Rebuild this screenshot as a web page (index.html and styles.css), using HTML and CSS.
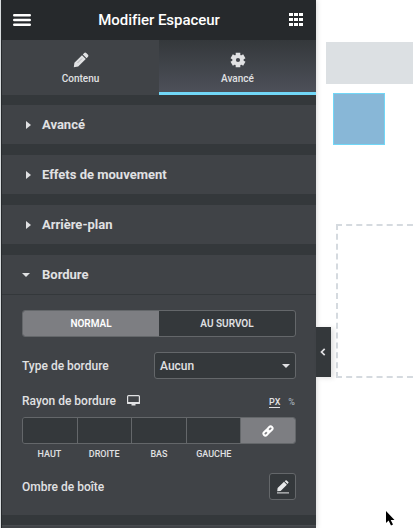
FILE: index.html
```
<!DOCTYPE html>
<html lang="fr">
<head>
<meta charset="UTF-8" />
<meta name="viewport" content="width=device-width, initial-scale=1" />
<title>Modifier Espaceur</title>
<link rel="stylesheet" href="styles.css">
</head>
<body>
  <div class="editor">
    <aside class="panel">
      <header class="panel-header">
        <svg class="icon-menu" width="18" height="12" viewBox="0 0 18 12"><path d="M1.200 1.300h15.600M1.200 6h15.600M1.200 10.700h15.600" stroke="#fff" stroke-width="2.400" stroke-linecap="round"/></svg>
        <h1>Modifier Espaceur</h1>
        <svg class="icon-grid" width="14" height="13" viewBox="0 0 14 13" fill="#fff"><path d="M0 0h4v3H0zM5 0h4v3H5zM10 0h4v3h-4zM0 5h4v3H0zM5 5h4v3H5zM10 5h4v3h-4zM0 10h4v3H0zM5 10h4v3H5zM10 10h4v3h-4z"/></svg>
      </header>

      <nav class="tabs">
        <a class="tab">
          <svg width="16" height="16" viewBox="0 0 16 16" fill="#e0e1e3"><path d="M.8 15.200l.6-4.400L9 3.200l3.800 3.800-7.600 7.600zM9.800 2.400L11.200 1q1-.9 2 0l1.800 1.800q.9 1 0 2l-1.400 1.400z"/><path d="M4.500 11l4.500-4.500" stroke="#8d8f92" stroke-width=".6"/></svg>
          <span>Contenu</span>
        </a>
        <a class="tab active">
          <svg width="16" height="16" viewBox="0 0 16 16"><g stroke="#e0e1e3" stroke-width="4.600"><path d="M8 .7v14.600M1.700 4.350l12.600 7.300M1.700 11.650l12.600-7.300"/></g><circle cx="8" cy="8" r="5.600" fill="#e0e1e3"/><circle cx="8" cy="8" r="2.100" fill="#41444b"/></svg>
          <span>Avancé</span>
        </a>
      </nav>

      <div class="sections">
        <div class="section-title"><i class="caret"></i>Avancé</div>
        <div class="section-title"><i class="caret"></i>Effets de mouvement</div>
        <div class="section-title"><i class="caret"></i>Arrière-plan</div>
        <section>
          <div class="section-title open"><i class="caret"></i>Bordure</div>
          <div class="controls">
            <div class="states">
              <span class="state selected">NORMAL</span>
              <span class="state">AU SURVOL</span>
            </div>

            <div class="row row-type">
              <label>Type de bordure</label>
              <div class="select">Aucun<i class="caret"></i></div>
            </div>

            <div class="row row-radius">
              <label>Rayon de bordure</label>
              <svg class="icon-screen" width="13" height="11" viewBox="0 0 13 11"><path d="M1.500.6h10q.9 0 .9.900v6.500H.6V1.500q0-.9.900-.9z" fill="none" stroke="#e0e1e3" stroke-width="1.200"/><path d="M0 7h13v1.200q0 .8-.8.800H.8Q0 9 0 8.200zM4.500 9h4v1.500h-4z" fill="#e0e1e3"/></svg>
              <div class="units"><span class="unit-on">PX</span><span>%</span></div>
            </div>
            <div class="dimensions">
              <div class="field"></div>
              <div class="field"></div>
              <div class="field"></div>
              <div class="field"></div>
              <div class="link">
                <svg width="12" height="12" viewBox="0 0 12 12" fill="none" stroke="#fff" stroke-width="2"><rect x="-3.200" y="-1.900" width="6.400" height="3.800" rx="1.900" transform="translate(7.700 4.300) rotate(-45)"/><rect x="-3.200" y="-1.900" width="6.400" height="3.800" rx="1.900" transform="translate(4.300 7.700) rotate(-45)"/></svg>
              </div>
            </div>
            <div class="dimension-labels">
              <span>HAUT</span><span>DROITE</span><span>BAS</span><span>GAUCHE</span><span></span>
            </div>

            <div class="row row-shadow">
              <label>Ombre de boîte</label>
              <div class="edit">
                <svg width="14" height="14" viewBox="0 0 14 14" fill="#e8e9ea"><path d="M1.200 11.300l.4-3.200L8 1.800l2.900 2.900-6.300 6.300zM8.700 1.200l.8-.8q.6-.5 1.200 0l1.600 1.500q.5.600 0 1.200l-.8.900z"/><path d="M1 12.400h12v1H1z"/></svg>
              </div>
            </div>
          </div>
        </section>
        <div class="section-title next"></div>
      </div>

      <div class="collapse">
        <svg width="6" height="8" viewBox="0 0 6 8"><path d="M4.700.8L1.500 4l3.200 3.200" fill="none" stroke="#e0e1e3" stroke-width="1.700"/></svg>
      </div>
    </aside>

    <main class="preview">
      <div class="bar"></div>
      <div class="spacer"></div>
      <div class="dropzone"></div>
    </main>
    <svg class="cursor" width="9" height="15" viewBox="0 0 9 15"><path d="M0 0v12l2.600-2.400L5 14.500l2-1-2.300-4.500H8.500z"/></svg>
  </div>
</body>
</html>
```
FILE: styles.css
```
* {
  box-sizing: border-box;
}

body {
  margin: 0;
  background: #fff;
  color: #e0e1e3;
  font-family: Roboto, sans-serif;
  font-size: 12px;
}

svg {
  display: block;
  flex: none;
}

.editor {
  position: relative;
  display: flex;
  height: 528px;
  overflow: hidden;
}

/* Panneau de gauche */
.panel {
  position: relative;
  z-index: 1;
  flex: none;
  width: 316px;
  height: 528px;
  background: #34383b;
  border-left: 1px solid #d8dcde;
  box-shadow: 0 0 6px rgba(0, 0, 0, 0.2);
}

.panel-header {
  display: flex;
  align-items: center;
  justify-content: space-between;
  height: 40px;
  padding: 0 13px 0 12px;
  background: #26292c;
}

.panel-header h1 {
  margin: 0 0 0 -2px;
  color: #fff;
  font-size: 15px;
  font-weight: 500;
  letter-spacing: -0.05px;
  line-height: 40px;
}

.icon-grid {
  margin-top: -1px;
}

.tabs {
  display: flex;
  height: 55px;
  border-left: 1px solid #26292c;
}

.tab {
  display: flex;
  flex-direction: column;
  align-items: center;
  gap: 4px;
  width: 157px;
  padding-top: 12px;
  background: #404347;
  font-size: 10px;
  font-weight: 500;
  line-height: 14px;
}

.tab.active {
  background: linear-gradient(#34383b, #4d5059);
  border-bottom: 3px solid #71d7f7;
}

.sections {
  display: flex;
  flex-direction: column;
  gap: 11px;
  height: 433px;
  padding-top: 10px;
  border-left: 1px solid #26292c;
  overflow: hidden;
}

.section-title {
  display: flex;
  flex: none;
  align-items: center;
  height: 39px;
  padding-left: 24px;
  background: #404347;
  font-size: 13px;
  font-weight: 700;
}

.caret {
  width: 5px;
  margin-right: 11px;
  border: solid transparent;
  border-width: 4px 0 4px 5px;
  border-left-color: #e0e1e3;
}

.open .caret,
.select .caret {
  width: 8px;
  margin-right: 12px;
  border-width: 4px 4px 0;
  border-top-color: #e0e1e3;
  border-left-color: transparent;
}

.open {
  padding-left: 20px;
}

.next {
  margin-top: -1px;
  border-top: 1px solid #484b4f;
}

/* Réglages de la bordure */
.controls {
  height: 221px;
  padding: 15px 20px 0;
  background: #404347;
  border-top: 1px solid #34383b;
}

.states {
  display: flex;
  height: 27px;
  background: #34383b;
  border: 1px solid #64676a;
  border-radius: 3px;
  overflow: hidden;
}

.state {
  flex: 1;
  font-size: 10px;
  font-weight: 600;
  line-height: 26px;
  text-align: center;
}

.selected {
  background: #7d7e82;
  color: #fff;
}

.row {
  display: flex;
  align-items: center;
  font-weight: 500;
}

.row-type {
  justify-content: space-between;
  height: 27px;
  margin-top: 15px;
}

.select {
  display: flex;
  align-items: center;
  justify-content: space-between;
  width: 142px;
  height: 27px;
  padding: 0 5px;
  background: #34383b;
  border: 1px solid #64676a;
  border-radius: 3px;
}

.select .caret {
  margin-right: 0;
}

.row-radius {
  height: 20px;
  margin-top: 12px;
}

.icon-screen {
  margin: -1px 0 0 11px;
}

.units {
  display: flex;
  gap: 8px;
  margin: 3px 1px 0 auto;
  color: #a4afb7;
  font-size: 9px;
  line-height: 10px;
}

.unit-on {
  color: #e0e1e3;
  border-bottom: 1px solid #e0e1e3;
}

.dimensions {
  display: flex;
  height: 27px;
  margin-top: 6px;
  border: 1px solid #64676a;
  border-radius: 3px;
  overflow: hidden;
}

.field {
  flex: 1;
  background: #34383b;
  border-right: 1px solid #64676a;
}

.link {
  display: flex;
  flex: 1;
  align-items: center;
  justify-content: center;
  background: #7d7e82;
}

.dimension-labels {
  display: flex;
  margin-top: 4px;
  font-size: 9px;
  font-weight: 500;
  line-height: 12px;
}

.dimension-labels span {
  flex: 1;
  text-align: center;
}

.row-shadow {
  justify-content: space-between;
  margin-top: 13px;
}

.edit {
  display: flex;
  align-items: center;
  justify-content: center;
  width: 27px;
  height: 27px;
  background: #34383b;
  border: 1px solid #64676a;
  border-radius: 3px;
}

/* Bouton de repli, accroché au bord du panneau */
.collapse {
  position: absolute;
  top: 327px;
  left: 100%;
  display: flex;
  align-items: center;
  justify-content: center;
  width: 15px;
  height: 50px;
  padding-right: 1px;
  background: #34383b;
  box-shadow: 3px 1px 5px rgba(0, 0, 0, 0.12);
}

/* Aperçu de la page */
.preview {
  flex: none;
  width: 110px;
  padding: 42px 0 0 10px;
}

.bar {
  height: 42px;
  background: #dce0e3;
}

.spacer {
  width: 52px;
  height: 52px;
  margin: 9px 0 0 7px;
  background: #88b7d7;
  border: 1px solid #71d7f7;
}

.dropzone {
  width: 300px;
  height: 154px;
  margin: 79px 0 0 10px;
  border: 2px dashed #d5dadf;
}

.cursor {
  position: absolute;
  z-index: 2;
  top: 511px;
  left: 386px;
}
```
